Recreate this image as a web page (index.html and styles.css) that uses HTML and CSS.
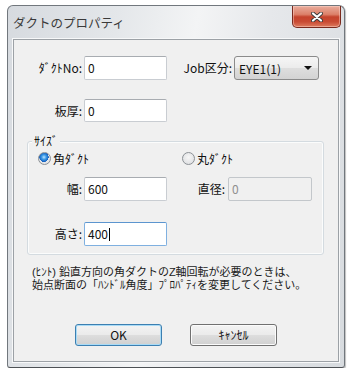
FILE: index.html
```html
<!DOCTYPE html>
<html lang="ja">
<head>
<meta charset="utf-8">
<link rel="stylesheet" href="styles.css">
</head>
<body>
<div class="window">
  <div class="titlebar">
    <span class="title">ダクトのプロパティ</span>
    <div class="close">
      <svg width="12" height="10" viewBox="0 0 12 10"><path d="M2 1.5 L10 8.5 M10 1.5 L2 8.5" stroke="#3b3b3b" stroke-width="4" stroke-linecap="round"/><path d="M2 1.5 L10 8.5 M10 1.5 L2 8.5" stroke="#ffffff" stroke-width="2.2" stroke-linecap="round"/></svg>
    </div>
  </div>
  <div class="client">
    <div class="row row1">
      <span class="lbl lbl-a">ﾀﾞｸﾄNo:</span>
      <div class="input">0</div>
      <span class="lbl lbl-b">Job区分:</span>
      <div class="select"><span>EYE1(1)</span><span class="arrow"></span></div>
    </div>
    <div class="row row2">
      <span class="lbl lbl-a">板厚:</span>
      <div class="input">0</div>
    </div>
    <div class="group">
      <span class="legend">ｻｲｽﾞ</span>
      <div class="radios">
        <div class="radio-item"><span class="radio checked"></span>角ﾀﾞｸﾄ</div>
        <div class="radio-item"><span class="radio"></span>丸ﾀﾞｸﾄ</div>
      </div>
      <div class="grow grow1">
        <span class="lbl glbl">幅:</span>
        <div class="input">600</div>
        <span class="lbl glbl2">直径:</span>
        <div class="input wide disabled">0</div>
      </div>
      <div class="grow grow2">
        <span class="lbl glbl">高さ:</span>
        <div class="input focus">400<span class="caret"></span></div>
      </div>
    </div>
    <div class="hint">
      <div class="hint-line">(ﾋﾝﾄ) 鉛直方向の角ダクトのZ軸回転が必要のときは、</div>
      <div class="hint-line">始点断面の「ﾊﾝﾄﾞﾙ角度」ﾌﾟﾛﾊﾟﾃｨを変更してください。</div>
    </div>
    <div class="buttons">
      <button class="btn default">OK</button>
      <button class="btn">ｷｬﾝｾﾙ</button>
    </div>
  </div>
</div>
</body>
</html>
```
FILE: styles.css
```css
* { box-sizing: border-box; }
body {
  margin: 0;
  background: #ffffff;
  font-family: "Noto Sans CJK JP", "Noto Sans", sans-serif;
  font-size: 12px;
  color: #111;
}
.window {
  margin: 5px 0 0 7px;
  width: 338px;
  height: 363px;
  border: 1px solid #71777d;
  border-bottom-color: #4d5155;
  border-radius: 6px 6px 3px 3px;
  background: linear-gradient(100deg, #d6dadf 0%, #e4e7ea 28%, #f3f4f5 48%, #e6e8eb 66%, #d7dbdf 100%);
  padding: 0 5px 5px;
  display: flex;
  flex-direction: column;
  box-shadow: 1px 1px 1px rgba(0,0,0,0.25);
}
.titlebar {
  height: 33px;
  display: flex;
  justify-content: space-between;
  align-items: flex-start;
  margin-right: -2px;
}
.title {
  padding-top: 9px;
  font-size: 12.5px;
  line-height: 16px;
  color: #3a3a3a;
}
.close {
  width: 49px;
  height: 22px;
  border: 1px solid #7a2a1e;
  border-top: none;
  border-radius: 0 0 5px 5px;
  background: linear-gradient(#e9ad9d 0%, #dc8069 40%, #c5432c 52%, #c94b33 75%, #de7c5f 100%);
  box-shadow: inset 0 0 0 1px rgba(255,220,210,0.45);
  display: flex;
  align-items: center;
  justify-content: center;
}
.client {
  height: 323px;
  border: 1px solid #9ca1a6;
  background: #f0f0f0;
  box-shadow: 0 0 0 1px #f7f8f9;
  display: flex;
  flex-direction: column;
}
.row {
  display: flex;
  align-items: center;
}
.row1 { margin-top: 16px; height: 24px; }
.row2 { margin-top: 19px; height: 23px; }
.lbl {
  text-align: right;
  padding-right: 2px;
  white-space: nowrap;
  line-height: 16px;
}
.lbl-a { width: 70px; }
.lbl-b { width: 67px; }
.input {
  width: 83px;
  height: 100%;
  background: #fff;
  border: 1px solid #c9cdd2;
  border-top-color: #a8acb1;
  border-radius: 2px;
  padding-left: 3px;
  display: flex;
  align-items: center;
  line-height: 16px;
}
.select {
  width: 85px;
  height: 100%;
  border: 1px solid #8b8b8b;
  border-radius: 3px;
  background: linear-gradient(#f6f6f6 0%, #ececec 48%, #dedede 52%, #d3d3d3 100%);
  padding: 0 6px 0 4px;
  display: flex;
  align-items: center;
  justify-content: space-between;
}
.arrow {
  width: 0;
  height: 0;
  border-left: 4px solid transparent;
  border-right: 4px solid transparent;
  border-top: 4px solid #111;
}
.group {
  position: relative;
  margin: 19px 0 0 13px;
  width: 297px;
  border: 1px solid #d4dbe0;
  border-radius: 3px;
  box-shadow: inset 0 0 0 1px #fbfcfc;
  padding-bottom: 8px;
}
.legend {
  position: absolute;
  top: -9px;
  left: 4px;
  padding: 0 2px;
  background: #f0f0f0;
  line-height: 16px;
}
.radios {
  margin-top: 10px;
  height: 13px;
  padding-left: 10px;
  display: grid;
  grid-template-columns: 144px auto;
}
.radio-item {
  display: flex;
  align-items: center;
  gap: 2px;
  line-height: 13px;
}
.radio {
  width: 13px;
  height: 13px;
  border-radius: 50%;
  border: 1px solid #8c9196;
  background: radial-gradient(circle at 50% 40%, #f7f7f7 0%, #e2e3e5 70%, #cfd1d4 100%);
  display: inline-block;
}
.radio.checked {
  background:
    radial-gradient(circle at 45% 38%, #bfe3ff 0%, #3d9be6 25%, #1560c0 50%, transparent 52%),
    radial-gradient(circle at 50% 40%, #f7f7f7 0%, #e2e3e5 70%, #cfd1d4 100%);
}
.grow {
  display: flex;
  align-items: center;
  height: 24px;
}
.grow1 { margin-top: 12px; }
.grow2 { margin-top: 21px; }
.glbl { width: 56px; }
.glbl2 { width: 61px; padding-right: 3px; }
.input.wide { width: 84px; }
.input.disabled {
  background: #f0f0f0;
  border-color: #c3c7cb;
  color: #8e8e8e;
}
.input.focus {
  border-color: #7fb0e0;
  border-top-color: #5c95cf;
}
.caret {
  display: inline-block;
  width: 1px;
  height: 13px;
  background: #000;
  margin-left: 1px;
}
.hint {
  margin: 11px 0 0 18px;
  font-family: "Liberation Sans", "Noto Sans CJK JP", sans-serif;
  font-size: 11px;
  color: #1a1a1a;
  white-space: nowrap;
  display: flex;
  flex-direction: column;
}
.hint-line {
  height: 13px;
  line-height: 13px;
}
.buttons {
  margin-top: 32px;
  padding-left: 61px;
  display: flex;
  gap: 28px;
}
.btn {
  width: 87px;
  height: 22px;
  font-family: "Noto Sans CJK JP", "Noto Sans", sans-serif;
  font-size: 12px;
  line-height: 16px;
  color: #111;
  border: 1px solid #707070;
  border-radius: 3px;
  background: linear-gradient(#f3f3f3 0%, #ebebeb 48%, #dddddd 52%, #d0d0d0 100%);
  box-shadow: inset 0 0 0 1px #fbfbfb;
  padding: 0;
}
.btn.default {
  border-color: #3c7fb1;
  box-shadow: inset 0 0 0 1px #a9dbf6;
}
```
